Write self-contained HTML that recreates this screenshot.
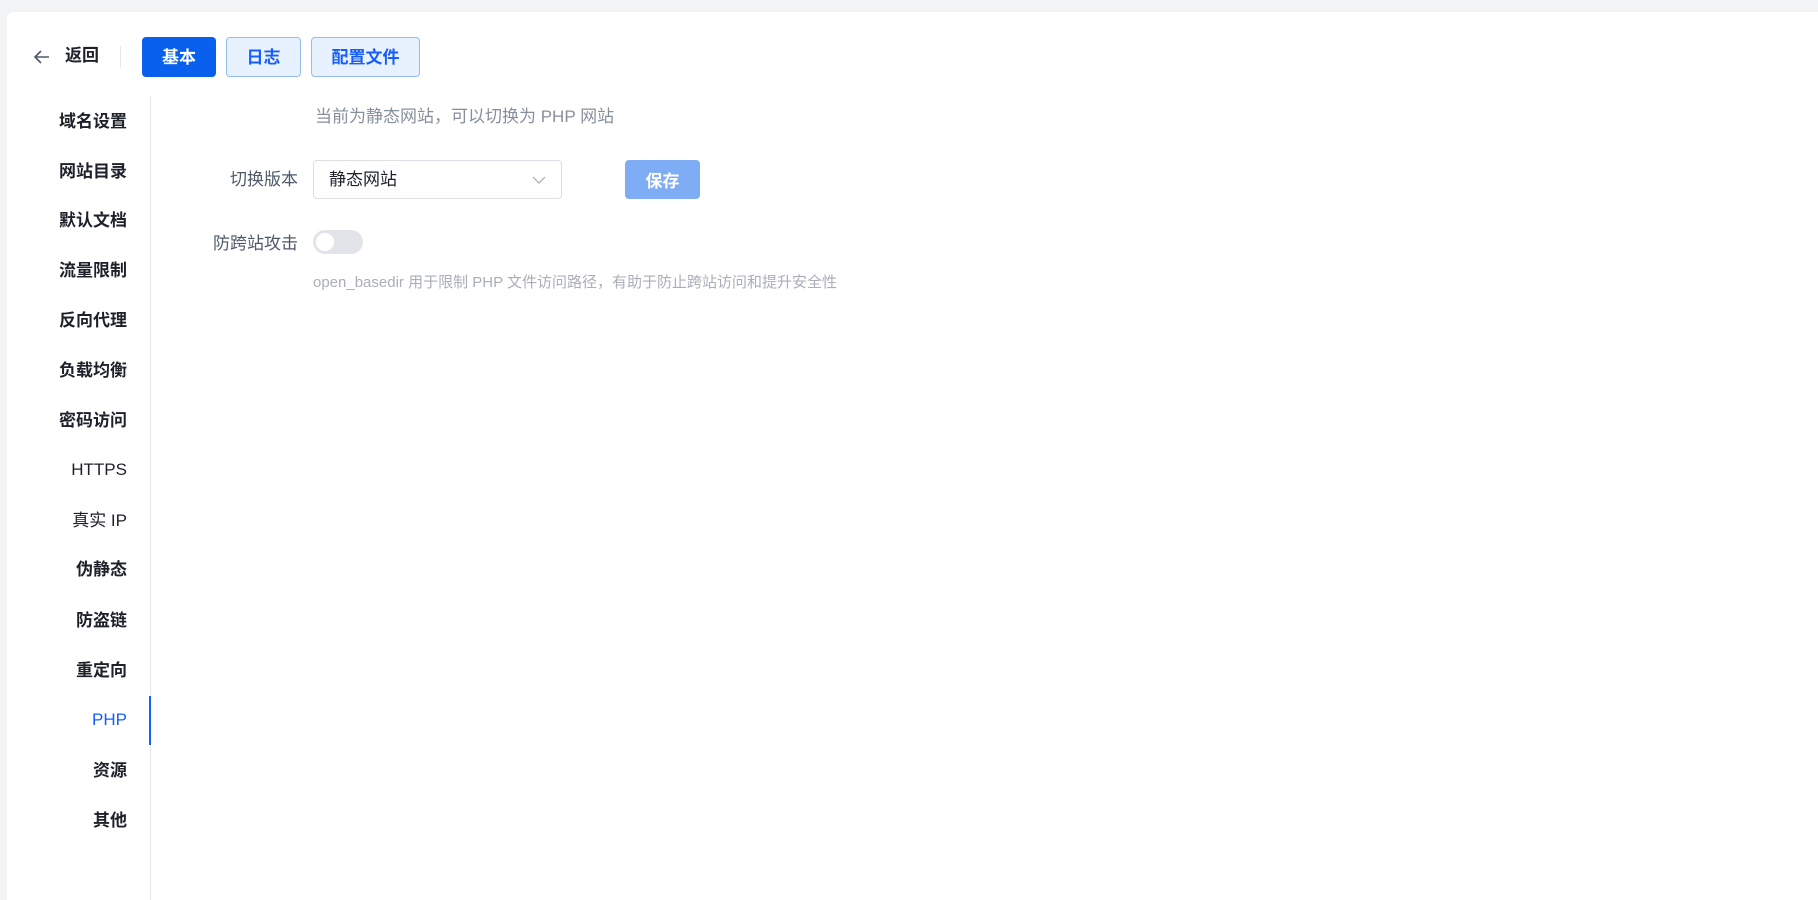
<!DOCTYPE html>
<html><head><meta charset="utf-8"><style>
*{margin:0;padding:0;box-sizing:border-box}
body{width:1818px;height:900px;background:#f2f3f5;font-family:"Liberation Sans","Noto Sans CJK SC",sans-serif;overflow:hidden;position:relative}
.card{position:absolute;left:7px;top:12px;width:1811px;height:888px;background:#fff;border-radius:6px 0 0 0}
.a{position:absolute}
.btn{position:absolute;top:37px;height:40px;border-radius:4px;font-size:17px;font-weight:700;display:flex;align-items:center;justify-content:center;line-height:1}
.tab{background:#e8f1fe;border:1px solid #94bdf7;color:#165dff}
.side div{position:absolute;left:0;width:150px;text-align:right;padding-right:23px;font-size:17px;font-weight:600;color:#1d2129;line-height:20px}
</style></head><body>
<div class="card"></div>
<svg class="a" style="left:33px;top:48px" width="18" height="18" viewBox="0 0 18 18"><path d="M16 9H2M8 3L2 9l6 6" fill="none" stroke="#4e5969" stroke-width="1.6"/></svg>
<div class="a" style="left:65px;top:46px;font-size:17px;font-weight:600;color:#1d2129;line-height:20px">返回</div>
<div class="a" style="left:120px;top:46px;width:1px;height:22px;background:#e5e6eb"></div>
<div class="btn" style="left:142px;width:74px;background:#0960ec;color:#fff">基本</div>
<div class="btn tab" style="left:226px;width:75px">日志</div>
<div class="btn tab" style="left:311px;width:109px">配置文件</div>
<div class="a" style="left:150px;top:96px;width:1px;height:804px;background:#e5e6eb"></div>
<div class="a" style="left:149px;top:696px;width:2px;height:49px;background:#165dff"></div>
<div class="side">
<div style="top:112px">域名设置</div><div style="top:162px">网站目录</div><div style="top:211px">默认文档</div><div style="top:261px">流量限制</div><div style="top:311px">反向代理</div><div style="top:361px">负载均衡</div><div style="top:411px">密码访问</div><div style="top:460px;font-weight:400">HTTPS</div><div style="top:511px;font-weight:400">真实 IP</div><div style="top:560px">伪静态</div><div style="top:611px">防盗链</div><div style="top:661px">重定向</div><div style="top:710px;font-weight:400;color:#165dff">PHP</div><div style="top:761px">资源</div><div style="top:811px">其他</div>
</div>
<div class="a" style="left:315px;top:107px;font-size:17px;color:#86909c;line-height:20px">当前为静态网站，可以切换为 PHP 网站</div>
<div class="a" style="left:178px;width:120px;text-align:right;top:170px;font-size:17px;color:#4e5969;line-height:20px">切换版本</div>
<div class="a" style="left:313px;top:160px;width:249px;height:39px;border:1px solid #dcdfe6;border-radius:4px;padding-left:15px;line-height:37px;font-size:17px;color:#1d2129">静态网站</div>
<svg class="a" style="left:532px;top:175px" width="14" height="10" viewBox="0 0 14 10"><path d="M1 2l6 6 6-6" fill="none" stroke="#a8abb2" stroke-width="1.2"/></svg>
<div class="a" style="left:625px;top:160px;width:75px;height:39px;border-radius:4px;background:#7fadf5;color:#fff;font-size:17px;font-weight:700;display:flex;align-items:center;justify-content:center">保存</div>
<div class="a" style="left:178px;width:120px;text-align:right;top:234px;font-size:17px;color:#4e5969;line-height:20px">防跨站攻击</div>
<div class="a" style="left:313px;top:230px;width:50px;height:24px;border-radius:12px;background:#e2e4ea"><div style="position:absolute;left:3px;top:3px;width:18px;height:18px;border-radius:50%;background:#fff"></div></div>
<div class="a" style="left:313px;top:274px;font-size:15px;color:#a9aeb8;line-height:18px">open_basedir 用于限制 PHP 文件访问路径，有助于防止跨站访问和提升安全性</div>
</body></html>
